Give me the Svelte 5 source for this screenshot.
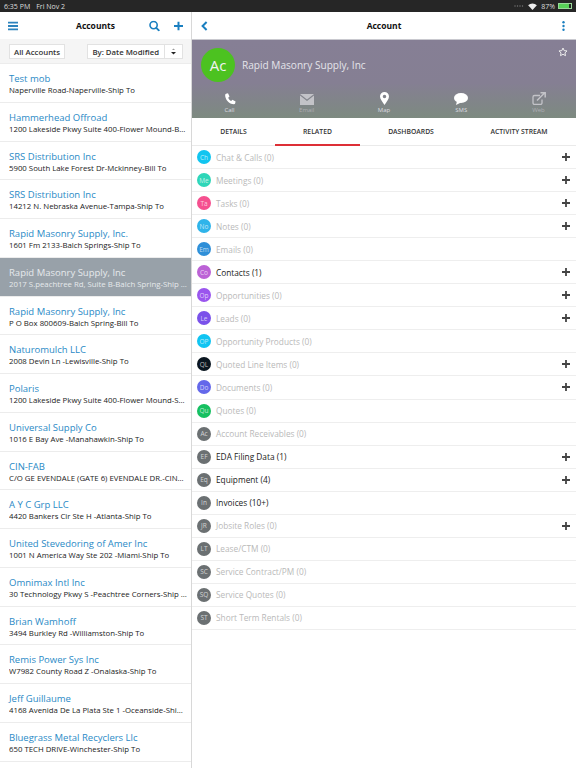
<script>
  const accounts = [
    { name: 'Test mob', addr: 'Naperville Road-Naperville-Ship To' },
    { name: 'Hammerhead Offroad', addr: '1200 Lakeside Pkwy Suite 400-Flower Mound-Bill To' },
    { name: 'SRS Distribution Inc', addr: '5900 South Lake Forest Dr-Mckinney-Bill To' },
    { name: 'SRS Distribution Inc', addr: '14212 N. Nebraska Avenue-Tampa-Ship To' },
    { name: 'Rapid Masonry Supply, Inc.', addr: '1601 Fm 2133-Balch Springs-Ship To' },
    { name: 'Rapid Masonry Supply, Inc', addr: '2017 S.peachtree Rd, Suite B-Balch Spring-Ship To', selected: true },
    { name: 'Rapid Masonry Supply, Inc', addr: 'P O Box 800609-Balch Spring-Bill To' },
    { name: 'Naturomulch LLC', addr: '2008 Devin Ln -Lewisville-Ship To' },
    { name: 'Polaris', addr: '1200 Lakeside Pkwy Suite 400-Flower Mound-Ship To' },
    { name: 'Universal Supply Co', addr: '1016 E Bay Ave -Manahawkin-Ship To' },
    { name: 'CIN-FAB', addr: 'C/O GE EVENDALE (GATE 6) EVENDALE DR.-CINCINNATI-Ship To' },
    { name: 'A Y C Grp LLC', addr: '4420 Bankers Cir Ste H -Atlanta-Ship To' },
    { name: 'United Stevedoring of Amer Inc', addr: '1001 N America Way Ste 202 -Miami-Ship To' },
    { name: 'Omnimax Intl Inc', addr: '30 Technology Pkwy S -Peachtree Corners-Ship To' },
    { name: 'Brian Wamhoff', addr: '3494 Burkley Rd -Williamston-Ship To' },
    { name: 'Remis Power Sys Inc', addr: 'W7982 County Road Z -Onalaska-Ship To' },
    { name: 'Jeff Guillaume', addr: '4168 Avenida De La Plata Ste 1 -Oceanside-Ship To' },
    { name: 'Bluegrass Metal Recyclers Llc', addr: '650 TECH DRIVE-Winchester-Ship To' }
  ];

  const related = [
    { code: 'Ch', label: 'Chat & Calls (0)', color: '#11c5f0', add: true },
    { code: 'Me', label: 'Meetings (0)', color: '#2fd6b8', add: true },
    { code: 'Ta', label: 'Tasks (0)', color: '#f5508f', add: true },
    { code: 'No', label: 'Notes (0)', color: '#2fb4ea', add: true },
    { code: 'Em', label: 'Emails (0)', color: '#2f8fd8' },
    { code: 'Co', label: 'Contacts (1)', color: '#bc62d6', add: true, active: true },
    { code: 'Op', label: 'Opportunities (0)', color: '#9a55ee', add: true },
    { code: 'Le', label: 'Leads (0)', color: '#7a52ea', add: true },
    { code: 'OP', label: 'Opportunity Products (0)', color: '#10c4f2' },
    { code: 'QL', label: 'Quoted Line Items (0)', color: '#0a1620', add: true },
    { code: 'Do', label: 'Documents (0)', color: '#6468ea', add: true },
    { code: 'Qu', label: 'Quotes (0)', color: '#16c060' },
    { code: 'Ac', label: 'Account Receivables (0)', color: '#6b7072' },
    { code: 'EF', label: 'EDA Filing Data (1)', color: '#6b7072', add: true, active: true },
    { code: 'Eq', label: 'Equipment (4)', color: '#6b7072', add: true, active: true },
    { code: 'In', label: 'Invoices (10+)', color: '#6b7072', active: true },
    { code: 'JR', label: 'Jobsite Roles (0)', color: '#6b7072', add: true },
    { code: 'LT', label: 'Lease/CTM (0)', color: '#6b7072' },
    { code: 'SC', label: 'Service Contract/PM (0)', color: '#6b7072' },
    { code: 'SQ', label: 'Service Quotes (0)', color: '#6b7072' },
    { code: 'ST', label: 'Short Term Rentals (0)', color: '#6b7072' }
  ];

  const tabs = ['DETAILS', 'RELATED', 'DASHBOARDS', 'ACTIVITY STREAM'];
</script>

<div class="screen">
  <div class="status">
    <span>6:35 PM</span>
    <span class="date">Fri Nov 2</span>
    <span class="spacer"></span>
    <svg width="10" height="2" viewBox="0 0 10 2"><g fill="#777"><circle cx="1" cy="1" r=".7" /><circle cx="3.500" cy="1" r=".7" /><circle cx="6" cy="1" r=".7" /><circle cx="8.500" cy="1" r=".7" /></g></svg>
    <svg class="wifi" width="9" height="7" viewBox="0 0 10 8"><path d="M0 2.600a7 7 0 0 1 10 0L5 8z" fill="#eee" /></svg>
    <span class="pct">87%</span>
    <span class="battery"><span class="charge"></span></span>
  </div>

  <div class="main">
    <aside class="left">
      <header class="bar">
        <svg class="menu" width="10" height="9" viewBox="0 0 10 9"><path d="M0 1h10M0 4.500h10M0 8h10" stroke="#2d83bd" stroke-width="1.800" /></svg>
        <span class="bar-title">Accounts</span>
        <svg class="search" width="11" height="11" viewBox="0 0 11 11" fill="none"><circle cx="4.600" cy="4.600" r="3.600" stroke="#1a7fc0" stroke-width="1.600" /><path d="M7.300 7.300l3 3" stroke="#1a7fc0" stroke-width="1.900" /></svg>
        <svg class="plus" width="9" height="9" viewBox="0 0 9 9"><path d="M4.500 0v9M0 4.500h9" stroke="#1a7fc0" stroke-width="2" /></svg>
      </header>

      <div class="filters">
        <span class="chip">All Accounts</span>
        <span class="sort">
          <span class="sort-label">By: Date Modified</span>
          <span class="sort-btn">
            <svg width="5" height="7" viewBox="0 0 5 7"><path d="M1 2l1.500-1.500L4 2z" fill="#999" /><path d="M0 4h5L2.500 6.600z" fill="#222" /></svg>
          </span>
        </span>
      </div>

      <div class="list">
        {#each accounts as account}
          <div class="account" class:selected={account.selected}>
            <div class="name">{account.name}</div>
            <div class="addr">{account.addr}</div>
          </div>
        {/each}
      </div>
    </aside>

    <section class="right">
      <header class="bar">
        <svg class="back" width="7" height="10" viewBox="0 0 7 10" fill="none"><path d="M5.600 1L1.600 5l4 4" stroke="#1a7fc0" stroke-width="2" /></svg>
        <span class="bar-title">Account</span>
        <svg class="more" width="3" height="10" viewBox="0 0 3 10"><circle cx="1.500" cy="1.300" r="1.200" fill="#1a7fc0" /><circle cx="1.500" cy="5" r="1.200" fill="#1a7fc0" /><circle cx="1.500" cy="8.700" r="1.200" fill="#1a7fc0" /></svg>
      </header>

      <div class="banner">
        <div class="identity">
          <div class="avatar">Ac</div>
          <div class="company">Rapid Masonry Supply, Inc</div>
          <svg class="star" width="10" height="10" viewBox="0 0 24 24" fill="none"><path d="M12 2.500l2.900 6.200 6.800.8-5 4.600 1.300 6.700-6-3.300-6 3.300 1.300-6.700-5-4.600 6.800-.8z" stroke="#eee" stroke-width="2.400" /></svg>
        </div>
        <div class="actions">
          <div class="action">
            <svg width="12" height="12" viewBox="0 0 24 24"><path d="M4 1.500l4-.8 3 6.500-2.600 2.200c1.100 3 3 5.200 6 6.600l2.400-2.400 6.400 3.200-1 4c-.3 1-1.200 1.700-2.300 1.700C10 22.300 2.200 13 2.300 4c0-1.200.7-2.200 1.700-2.500z" fill="#fff" /></svg>
            <span>Call</span>
          </div>
          <div class="action dim">
            <svg width="14" height="11" viewBox="0 0 14 11"><path d="M0 0h14L7 5.500z" fill="#c3c3c8" /><path d="M0 1.500v9.500h14V1.500L7 7z" fill="#c3c3c8" /></svg>
            <span>Email</span>
          </div>
          <div class="action">
            <svg width="9" height="13" viewBox="0 0 18 26"><path fill-rule="evenodd" d="M9 0a9 9 0 0 1 9 9c0 5-5 11-9 17C5 20 0 14 0 9a9 9 0 0 1 9-9zm0 5.500a3.500 3.500 0 1 0 0 7 3.500 3.500 0 0 0 0-7z" fill="#fff" /></svg>
            <span>Map</span>
          </div>
          <div class="action">
            <svg width="14" height="12" viewBox="0 0 14 12"><ellipse cx="7" cy="5" rx="7" ry="5" fill="#fff" /><path d="M3 8l-1 4 5-2.500z" fill="#fff" /></svg>
            <span>SMS</span>
          </div>
          <div class="action dim">
            <svg width="14" height="13" viewBox="0 0 14 13" fill="none"><path d="M8 3.500H2.500a1.500 1.500 0 0 0-1.500 1.500v6a1.500 1.500 0 0 0 1.500 1.500h6a1.500 1.500 0 0 0 1.500-1.500V7.500" stroke="#c3c3c8" stroke-width="1.300" /><path d="M5 8.500L12.500 1M8.500.8h4.700v4.700" stroke="#c3c3c8" stroke-width="1.500" /></svg>
            <span>Web</span>
          </div>
        </div>
      </div>

      <nav class="tabs">
        {#each tabs as tab}
          <div class="tab" class:current={tab === 'RELATED'}>{tab}</div>
        {/each}
      </nav>

      <div class="related">
        {#each related as item}
          <div class="rel-row">
            <span class="badge" style="background: {item.color}">{item.code}</span>
            <span class="rel-label" class:active={item.active}>{item.label}</span>
            {#if item.add}
              <svg class="rel-add" width="8" height="8" viewBox="0 0 8 8"><path d="M4 0v8M0 4h8" stroke="#444" stroke-width="1.800" /></svg>
            {/if}
          </div>
        {/each}
      </div>
    </section>
  </div>
</div>

<style>
  :global(body) {
    margin: 0;
    background: #fff;
  }

  .screen {
    width: 576px;
    height: 768px;
    overflow: hidden;
    display: flex;
    flex-direction: column;
    font-family: "Open Sans", sans-serif;
    color: #222;
  }

  .status {
    height: 12px;
    flex: none;
    background: #262626;
    color: #ddd;
    font-size: 7px;
    display: flex;
    align-items: center;
    padding: 0 4px;
    gap: 2px;
  }

  .date {
    margin-left: 4px;
  }

  .spacer {
    flex: 1;
  }

  .wifi {
    margin-left: 2px;
  }

  .pct {
    margin-left: 2px;
  }

  .battery {
    width: 14px;
    height: 6px;
    border: 1px solid #9ad89a;
    box-sizing: border-box;
    margin-left: 1px;
    display: block;
  }

  .charge {
    display: block;
    height: 100%;
    width: 87%;
    background: #58d058;
  }

  .main {
    flex: 1;
    display: flex;
    min-height: 0;
  }

  .left {
    width: 191px;
    flex: none;
    display: flex;
    flex-direction: column;
    border-right: 1px solid #d8d8d8;
  }

  .right {
    flex: 1;
    min-width: 0;
    display: flex;
    flex-direction: column;
  }

  .bar {
    height: 27px;
    flex: none;
    position: relative;
    display: flex;
    align-items: center;
    justify-content: center;
    background: #fff;
  }

  .bar-title {
    font-size: 8.500px;
    font-weight: 700;
    color: #111;
  }

  .bar svg {
    position: absolute;
    top: 50%;
    transform: translateY(-50%);
  }

  .menu { left: 8px; }
  .search { left: 149px; }
  .plus { left: 174px; }
  .back { left: 9px; }
  .more { right: 11px; }

  .filters {
    height: 25px;
    flex: none;
    box-sizing: border-box;
    padding: 5px 8px 4px 9px;
    background: #f5f5f5;
    border-bottom: 1px solid #ececec;
    display: flex;
    justify-content: space-between;
    font-size: 7.800px;
    font-weight: 600;
    color: #333;
  }

  .chip,
  .sort {
    background: #fff;
    border: 1px solid #e2e2e2;
    display: flex;
    align-items: center;
    box-sizing: border-box;
  }

  .chip {
    padding: 0 4px;
  }

  .sort-label {
    padding: 0 5px 0 4px;
  }

  .sort-btn {
    width: 17px;
    align-self: stretch;
    border-left: 1px solid #e2e2e2;
    display: flex;
    align-items: center;
    justify-content: center;
  }

  .list {
    flex: 1;
    overflow: hidden;
  }

  .account {
    height: 38.750px;
    box-sizing: border-box;
    padding: 8px 9px 0;
    border-bottom: 1px solid #ececec;
  }

  .name {
    font-size: 9.500px;
    line-height: 13px;
    color: #2a8ac6;
    white-space: nowrap;
  }

  .addr {
    font-size: 7.800px;
    line-height: 11px;
    color: #222;
    white-space: nowrap;
    overflow: hidden;
    text-overflow: ellipsis;
    margin-right: -5px;
  }

  .selected {
    background: #98a1a9;
  }

  .selected .name,
  .selected .addr {
    color: #e6e9ec;
  }

  .banner {
    height: 79px;
    flex: none;
    border-top: 1px solid #c9c9cf;
    box-sizing: border-box;
    background: linear-gradient(#867f95 0%, #857f93 55%, #7d8a80 100%);
    display: flex;
    flex-direction: column;
    justify-content: space-between;
    position: relative;
  }

  .identity {
    display: flex;
    align-items: center;
    padding: 8px 0 0 9px;
    gap: 7px;
  }

  .avatar {
    width: 34px;
    height: 34px;
    border-radius: 50%;
    background: #4cc220;
    color: #f2f2f2;
    font-size: 15px;
    display: flex;
    align-items: center;
    justify-content: center;
  }

  .company {
    color: #e4e4ea;
    font-size: 10.100px;
  }

  .star {
    position: absolute;
    top: 7px;
    right: 8px;
  }

  .actions {
    display: flex;
    justify-content: space-between;
    padding: 0 0 4px;
    margin: 0 -1px;
  }

  .action {
    width: 77px;
    display: flex;
    flex-direction: column;
    align-items: center;
    justify-content: flex-end;
    color: #dcdce0;
    font-size: 6px;
    line-height: 8px;
    gap: 1px;
  }

  .action.dim {
    color: #aeaeb4;
  }

  .tabs {
    height: 28px;
    flex: none;
    display: grid;
    grid-template-columns: 83px 85px 102px 1fr;
    border-bottom: 1px solid #eaeaea;
    box-sizing: border-box;
    font-size: 6.800px;
    font-weight: 600;
    color: #333;
  }

  .tab {
    display: flex;
    align-items: center;
    justify-content: center;
    padding-bottom: 1px;
    box-sizing: border-box;
  }

  .current {
    border-bottom: 2.500px solid #dd2f36;
    margin-bottom: -1px;
    padding-bottom: 0;
  }

  .related {
    flex: 1;
  }

  .rel-row {
    height: 23.050px;
    box-sizing: border-box;
    display: flex;
    align-items: center;
    padding: 0 6px 0 5px;
    border-bottom: 1px solid #eeeeee;
  }

  .badge {
    width: 14px;
    height: 14px;
    flex: none;
    border-radius: 50%;
    color: rgba(255, 255, 255, 0.7);
    font-size: 6.500px;
    display: flex;
    align-items: center;
    justify-content: center;
  }

  .rel-label {
    margin-left: 5px;
    font-size: 8.300px;
    color: #b9b9b9;
    flex: 1;
  }

  .rel-label.active {
    color: #222;
  }
</style>
